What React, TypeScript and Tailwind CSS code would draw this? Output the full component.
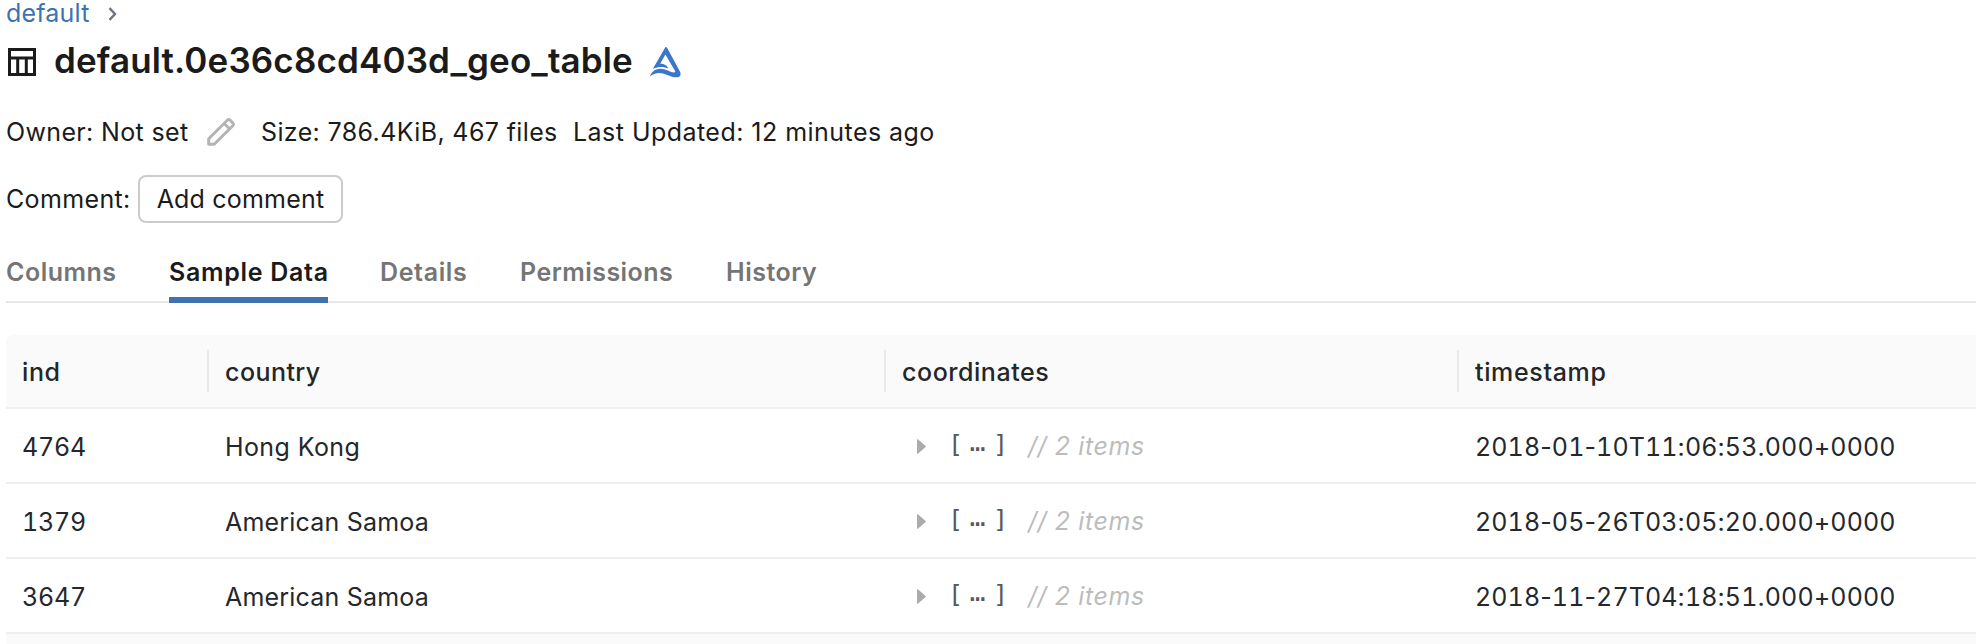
const rows = [
  { ind: "4764", country: "Hong Kong", spacing: "tracking-[0.4px]", time: "2018-01-10T11:06:53.000+0000" },
  { ind: "1379", country: "American Samoa", spacing: "tracking-[0.2px]", time: "2018-05-26T03:05:20.000+0000" },
  { ind: "3647", country: "American Samoa", spacing: "tracking-[0.2px]", time: "2018-11-27T04:18:51.000+0000" },
];

function TableIcon() {
  return (
    <svg width="28" height="28" viewBox="0 0 28 28" className="ml-0.5" fill="none" stroke="#1b1b1b" strokeWidth="3">
      <rect x="1.5" y="1.5" width="25" height="25" />
      <path d="M1.5 10H26.5M9.7 10V26.5M18.3 10V26.5" />
    </svg>
  );
}

function DeltaIcon() {
  return (
    <svg width="34" height="33" viewBox="0 0 34 33" fill="#3a76cb">
      <path d="M16.5 1C17.4 1 18 1.5 18.5 2.5L30.8 25.2C33 29.3 30.4 31.8 26 31.3C19.5 30.3 15 26.5 9 27C5.8 27.3 3.2 28.6 0.8 30.6C2.6 25.6 6 23 10.8 22.7C17 22.4 21 26.4 25 26.5C26.4 26.5 26.4 25.6 25.8 24.5L16.4 8.5L11.2 17.8C14.7 17.6 18 19 19.3 22.8C14.8 20.2 9.6 20.6 3.9 22.7Z" />
    </svg>
  );
}

function PencilIcon() {
  return (
    <svg width="28" height="28" viewBox="0 0 28 28" fill="none" stroke="#b4b4b4" strokeWidth="3" strokeLinejoin="round">
      <path d="M1.7 26.3V20.8L20.3 2.2Q21.7 1 23.1 2.2L25.8 4.9Q27 6.3 25.8 7.7L7.2 26.3Z" />
      <path d="M17.2 5.5L22.5 10.8" />
    </svg>
  );
}

// Digits are aligned in columns; separators keep their natural width.
function Timestamp({ value }: { value: string }) {
  return (
    <div className="tracking-[0.1px]">
      {value.split(/(\D)/).map((part, i) => (
        <span key={i} className={i % 2 ? "normal-nums" : "tabular-nums"}>{part}</span>
      ))}
    </div>
  );
}

const tab = "flex h-[51px] items-start leading-[40px] font-semibold text-[#757575]";

export default function App() {
  return (
    <div className="h-[644px] w-full overflow-hidden bg-white pl-1.5 font-['Inter',sans-serif] text-[25px] whitespace-nowrap text-[#1b1b1b]">
      <nav className="flex h-[26px] items-center leading-[26px]">
        <a className="w-[102px] tracking-[0.2px] text-[#4172b0]">default</a>
        <svg width="9" height="14" viewBox="0 0 9 14" fill="none" stroke="#6b747c" strokeWidth="2.4" className="mt-0.5">
          <path d="M1.5 1.2L7 7L1.5 12.8" />
        </svg>
      </nav>

      <header className="mt-3 flex h-11 items-center">
        <div className="w-[48px] pt-1"><TableIcon /></div>
        <h1 className="w-[595px] text-[35px] leading-[44px] font-semibold tracking-[0.14px]">default.0e36c8cd403d_geo_table</h1>
        <div className="pt-1"><DeltaIcon /></div>
      </header>

      <div className="mt-[30px] flex h-10 items-center leading-[40px]">
        <span className="w-[201px] tracking-[0.35px]">Owner: Not set</span>
        <PencilIcon />
        <span className="ml-[26px] w-[312px] tracking-[0.37px]">Size: 786.4KiB, 467 files</span>
        <span className="tracking-[0.46px]">Last Updated: 12 minutes ago</span>
      </div>

      <div className="mt-[23px] flex h-12 items-center">
        <span className="w-[132px] pt-0.5 tracking-[0.35px]">Comment:</span>
        <button className="h-12 w-[205px] rounded-lg border-2 border-[#cbcbcb] pt-0.5 tracking-[0.2px]">Add comment</button>
      </div>

      <div className="mt-[29px] flex h-[51px] border-b-2 border-[#e8e8e8]">
        <div className={`${tab} mr-[53px] w-[110px] tracking-[0.5px]`}>Columns</div>
        <div className="mr-[52px] h-[51px] w-[159px] border-b-6 border-[#4172b0] leading-[40px] font-semibold tracking-[0.7px]">Sample Data</div>
        <div className={`${tab} w-[140px] tracking-[0.63px]`}>Details</div>
        <div className={`${tab} w-[206px] tracking-[0.45px]`}>Permissions</div>
        <div className={`${tab} tracking-[0.5px]`}>History</div>
      </div>

      <div className="mt-8 flex h-[74px] items-start rounded-tl-lg border-b-2 border-[#efefef] bg-[#fafafa] font-medium text-[#242628]">
        <div className="w-[201px] pl-4 leading-[75px] tracking-[0.6px]">ind</div>
        <div className="mt-[15px] h-[42px] w-0.5 bg-[#e9e9e9]" />
        <div className="w-[675px] pl-4 leading-[75px] tracking-[0.45px]">country</div>
        <div className="mt-[15px] h-[42px] w-0.5 bg-[#e9e9e9]" />
        <div className="w-[571px] pl-4 leading-[75px] tracking-[0.55px]">coordinates</div>
        <div className="mt-[15px] h-[42px] w-0.5 bg-[#e9e9e9]" />
        <div className="pl-4 leading-[75px] tracking-[0.65px]">timestamp</div>
      </div>

      {rows.map((r) => (
        <div key={r.ind} className="flex h-[75px] items-center border-b-2 border-[#efefef] pt-[4px] text-[#24282d]">
          <div className="w-[219px] pl-4 tabular-nums tracking-[-0.2px]">{r.ind}</div>
          <div className={`w-[692px] ${r.spacing}`}>{r.country}</div>
          <svg width="9" height="15" viewBox="0 0 9 15" fill="#ababab" className="mb-0.5">
            <path d="M0 0.6Q0.5 0 1.2 0.6L8.6 7Q9 7.5 8.6 8L1.2 14.4Q0.5 15 0 14.4Z" />
          </svg>
          <div className="mb-[5px] ml-[22px] flex w-[79px] font-['DejaVu_Sans_Mono',monospace] leading-[40px] text-[#595959]">
            <span className="w-[22px]">[</span>
            <span className="w-[23px] font-['Liberation_Mono',monospace] font-bold">…</span>
            <span>]</span>
          </div>
          <div className="mb-[2px] w-[448px] pl-px tracking-[0.6px] text-[#bcbcbc] italic">// 2 items</div>
          <Timestamp value={r.time} />
        </div>
      ))}
      <div className="h-[10px] bg-[#fafafa]" />
    </div>
  );
}
